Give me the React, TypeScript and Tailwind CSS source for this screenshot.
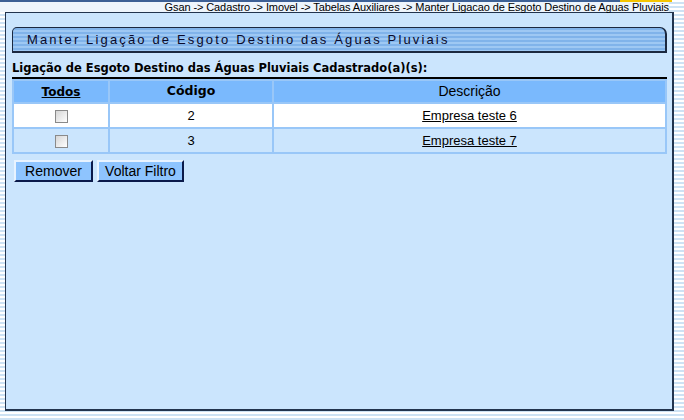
const rows = [
  { codigo: "2", descricao: "Empresa teste 6" },
  { codigo: "3", descricao: "Empresa teste 7" },
];

function Checkbox() {
  return (
    <span className="inline-block h-[13px] w-[13px] border border-[#8a8a8a] bg-[linear-gradient(135deg,#d6d6d6,#ffffff)] align-middle" />
  );
}

function Button({ label, width }: { label: string; width: string }) {
  return (
    <button
      className={`${width} h-[22px] border-2 border-t-[#e8f3ff] border-l-[#e8f3ff] border-r-[#0b1a4a] border-b-[#0b1a4a] bg-[#8ec4fe] p-0 font-['Liberation_Sans',Arial,sans-serif] text-[14px] leading-none text-black`}
    >
      {label}
    </button>
  );
}

export default function App() {
  return (
    <div className="h-[420px] w-[684px] overflow-hidden bg-[repeating-linear-gradient(to_bottom,#ffffff_0px,#ffffff_2px,#cde2f4_2px,#cde2f4_4px)]">
      <div className="flex">
        <div className="h-[2px] w-[620px] bg-[#3d6095]" />
        <div className="h-[2px] w-[52px] bg-[#f5c400]" />
      </div>
      <div className="flex h-[10px] w-[669px] items-center justify-end bg-[#eef5fc] font-['Liberation_Sans',Arial,sans-serif] text-[11px] leading-none tracking-[-0.1px] text-black">
        Gsan -&gt; Cadastro -&gt; Imovel -&gt; Tabelas Auxiliares -&gt; Manter Ligacao de Esgoto Destino de Aguas Pluviais
      </div>

      <div className="ml-[5px] h-[399px] w-[669px] border border-r-2 border-b-2 border-[#22344e] bg-[#cbe5fd] pt-[14px] pr-[5px] pl-[6px]">
        <div className="flex h-[26px] items-center rounded-tl-[5px] rounded-tr-[7px] border border-r-2 border-b-2 border-[#1b2940] bg-[repeating-linear-gradient(to_bottom,#80b3ea_0px,#80b3ea_2px,#9ec8f3_2px,#9ec8f3_4px)] pl-[14px] font-['Liberation_Sans',Arial,sans-serif] text-[13px] tracking-[2.15px] text-[#0a0a2a]">
          Manter Ligação de Esgoto Destino das Águas Pluviais
        </div>

        <div className="mt-[6px] h-[18px] font-['DejaVu_Sans',Verdana,sans-serif] text-[11.5px] font-bold leading-[18px] text-black">
          Ligação de Esgoto Destino das Águas Pluviais Cadastrado(a)(s):
        </div>

        <div className="h-[2px] bg-black" />

        <table className="w-full border-separate border-spacing-[2px] bg-[#99c7f8] font-['Liberation_Sans',Arial,sans-serif] text-[13px] text-black">
          <thead>
            <tr className="h-[20px] bg-[#7ab9fd]">
              <th className="w-[94px] p-0 font-['DejaVu_Sans',Verdana,sans-serif] text-[12px] font-bold underline">
                Todos
              </th>
              <th className="w-[162px] p-0 font-['DejaVu_Sans',Verdana,sans-serif] text-[12.5px] font-semibold">
                Código
              </th>
              <th className="p-0 text-[14px] font-normal">Descrição</th>
            </tr>
          </thead>
          <tbody>
            {rows.map((row, i) => (
              <tr key={row.codigo} className={i === 0 ? "h-[23px] bg-white" : "h-[23px] bg-[#cbe5fd]"}>
                <td className="p-0 text-center">
                  <Checkbox />
                </td>
                <td className="p-0 text-center">{row.codigo}</td>
                <td className="p-0 text-center">
                  <a className="text-black underline">{row.descricao}</a>
                </td>
              </tr>
            ))}
          </tbody>
        </table>

        <div className="mt-[6px] ml-[2px] flex gap-[4px]">
          <Button label="Remover" width="w-[79px]" />
          <Button label="Voltar Filtro" width="w-[87px]" />
        </div>
      </div>
    </div>
  );
}
